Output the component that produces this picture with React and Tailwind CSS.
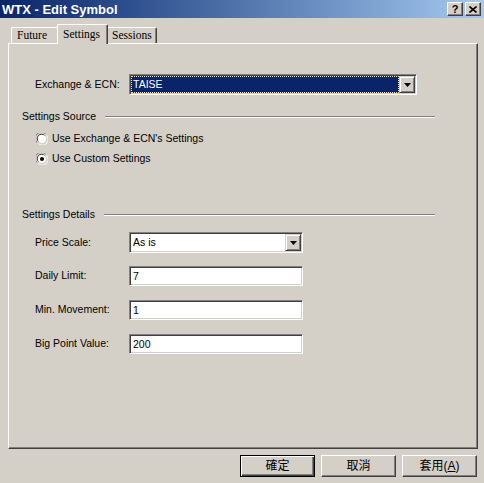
import React from "react"

// Win2k-style "Edit Symbol" dialog

const ui = { fontFamily: '"Liberation Sans", "Noto Sans CJK TC", sans-serif' }
const serif = { fontFamily: '"Liberation Serif", "Noto Sans CJK TC", serif' }

function Arrow() {
  return (
    <div className="w-[16px] h-[17px] bg-[#d4d0c8] border-t border-l border-t-[#d4d0c8] border-l-[#d4d0c8] border-r border-b border-r-[#404040] border-b-[#404040] shadow-[inset_1px_1px_0_#ffffff,inset_-1px_-1px_0_#808080] flex items-center justify-center">
      <svg width="7" height="4" viewBox="0 0 7 4">
        <path d="M0 0h7L3.5 4z" fill="#000" />
      </svg>
    </div>
  )
}

function Combo({ className, value, focused }) {
  return (
    <div className={"h-[21px] bg-white border border-t-[#808080] border-l-[#808080] border-r-white border-b-white shadow-[inset_1px_1px_0_#404040,inset_-1px_-1px_0_#d4d0c8] p-px flex items-stretch " + className}>
      {focused ? (
        <div className="flex-1 bg-[#0a246a] border border-dotted border-[#f5db95] text-white text-[10.5px] leading-[15px] pl-px">
          {value}
        </div>
      ) : (
        <div className="flex-1 text-black text-[10.5px] leading-[17px] pl-[2px]">{value}</div>
      )}
      <Arrow />
    </div>
  )
}

function Field({ value }) {
  return (
    <div className="w-[174px] h-[20px] bg-white border border-t-[#808080] border-l-[#808080] border-r-white border-b-white shadow-[inset_1px_1px_0_#404040,inset_-1px_-1px_0_#d4d0c8] px-[3px] text-[10.5px] leading-[18px] text-black">
      {value}
    </div>
  )
}

function Radio({ checked, label, className }) {
  return (
    <div className={"flex items-center h-[16px] pl-[27px] " + className}>
      <svg width="12" height="12" viewBox="0 0 12 12">
        <path d="M1 9.5A5.5 5.5 0 0 1 9.5 1" fill="none" stroke="#808080" />
        <path d="M2.5 8.5A4.2 4.2 0 0 1 8.5 2.5" fill="none" stroke="#404040" />
        <circle cx="6" cy="6" r="4" fill="#fff" />
        <path d="M2.5 10.5A5.5 5.5 0 0 0 10.5 2.5" fill="none" stroke="#ffffff" />
        {checked && <circle cx="6" cy="6" r="2" fill="#000" />}
      </svg>
      <span className="ml-[4px] text-[10.5px] text-black">{label}</span>
    </div>
  )
}

function Group({ title, className }) {
  return (
    <div className={"flex items-center h-[14px] ml-[13px] w-[413px] " + className}>
      <span className="text-[10.5px] text-black whitespace-nowrap">{title}</span>
      <div className="flex-1 ml-[9px] h-[2px] border-t border-t-[#808080] border-b border-b-white" />
    </div>
  )
}

function Row({ label, children, className }) {
  return (
    <div className={"flex items-center pl-[26px] " + className}>
      <span className="w-[94px] text-[10.5px] text-black">{label}</span>
      {children}
    </div>
  )
}

function Btn({ children, primary }) {
  return primary ? (
    <div className="w-[75px] h-[22px] border border-black bg-[#d4d0c8] shadow-[inset_1px_1px_0_#ffffff,inset_-1px_-1px_0_#404040,inset_-2px_-2px_0_#808080] flex items-center justify-center text-[12px] text-black">
      {children}
    </div>
  ) : (
    <div className="w-[75px] h-[22px] border border-t-white border-l-white border-r-[#404040] border-b-[#404040] bg-[#d4d0c8] shadow-[inset_-1px_-1px_0_#808080] flex items-center justify-center text-[12px] text-black">
      {children}
    </div>
  )
}

function TitleBtn({ children }) {
  return (
    <div className="w-[16px] h-[14px] bg-[#d4d0c8] border border-t-white border-l-white border-r-[#404040] border-b-[#404040] shadow-[inset_-1px_-1px_0_#808080] flex items-center justify-center">
      {children}
    </div>
  )
}

export default function App() {
  return (
    <div className="w-[484px] h-[483px] bg-[#d4d0c8] overflow-hidden flex flex-col" style={ui}>
      {/* title bar */}
      <div className="h-[18px] bg-gradient-to-r from-[#0a246a] to-[#a6caf0] flex items-center pl-[2px] pr-[3px]">
        <span className="text-white font-bold text-[13px] leading-none">WTX - Edit Symbol</span>
        <div className="ml-auto flex gap-[2px]">
          <TitleBtn>
            <span className="text-[11px] font-bold leading-none text-black">?</span>
          </TitleBtn>
          <TitleBtn>
            <svg width="8" height="7" viewBox="0 0 8 7">
              <path d="M0.5 0.5l7 6M7.5 0.5l-7 6" stroke="#000" strokeWidth="1.6" />
            </svg>
          </TitleBtn>
        </div>
      </div>

      {/* tabs */}
      <div className="mt-[6px] h-[19px] flex items-start pl-[11px]" style={serif}>
        <div className="mt-[3px] w-[46px] h-[16px] border-t border-l border-white rounded-tl-[2px] flex items-center pl-[5px] text-[11.5px] text-black">
          Future
        </div>
        <div className="relative z-10 w-[51px] h-[20px] bg-[#d4d0c8] border-t border-l border-white border-r border-r-[#404040] rounded-t-[2px] shadow-[inset_-1px_0_0_#808080] flex items-start pt-[1px] pl-[5px] text-[11.5px] text-black">
          Settings
        </div>
        <div className="mt-[3px] w-[49px] h-[16px] border-t border-t-white border-r border-r-[#404040] rounded-tr-[2px] shadow-[inset_-1px_0_0_#808080] flex items-center pl-[4px] text-[11.5px] text-black">
          Sessions
        </div>
      </div>

      {/* panel */}
      <div className="ml-[8px] w-[470px] h-[406px] border-t border-l border-white border-r border-b border-r-[#404040] border-b-[#404040] shadow-[inset_-1px_-1px_0_#808080] flex flex-col">
        <Row label="Exchange & ECN:" className="mt-[30px]">
          <Combo className="w-[288px]" value="TAISE" focused />
        </Row>

        <Group title="Settings Source" className="mt-[15px]" />
        <Radio label="Use Exchange & ECN's Settings" className="mt-[7px]" />
        <Radio label="Use Custom Settings" checked className="mt-[4px]" />

        <Group title="Settings Details" className="mt-[41px]" />
        <Row label="Price Scale:" className="mt-[10px]">
          <Combo className="w-[174px]" value="As is" />
        </Row>
        <Row label="Daily Limit:" className="mt-[13px]">
          <Field value="7" />
        </Row>
        <Row label="Min. Movement:" className="mt-[14px]">
          <Field value="1" />
        </Row>
        <Row label="Big Point Value:" className="mt-[14px]">
          <Field value="200" />
        </Row>
      </div>

      {/* buttons */}
      <div className="mt-[6px] flex justify-end gap-[6px] pr-[7px]">
        <Btn primary>確定</Btn>
        <Btn>取消</Btn>
        <Btn>
          套用(<span className="underline">A</span>)
        </Btn>
      </div>
    </div>
  )
}
